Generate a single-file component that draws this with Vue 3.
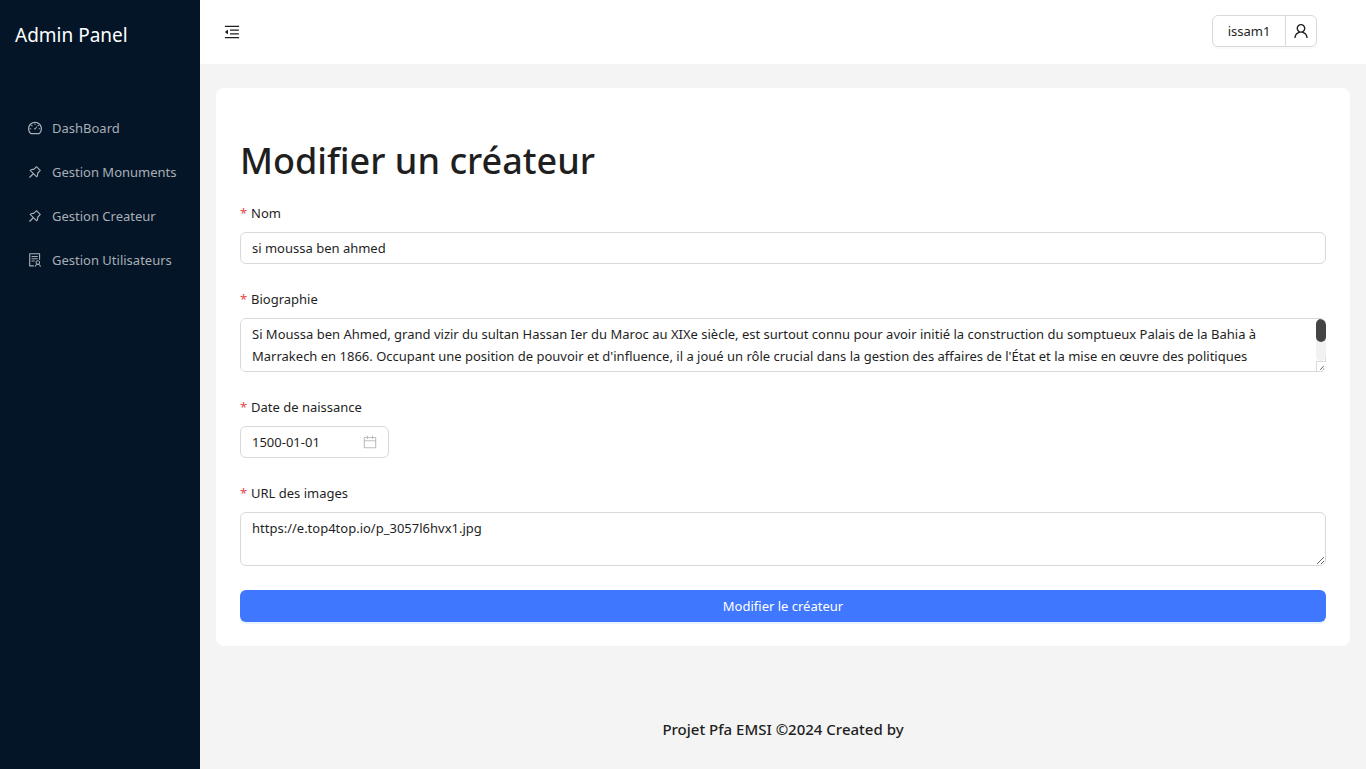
<script setup>
import { ref } from 'vue'

const icons = {
  dashboard: 'M924.8 385.6a446.700 446.700 0 00-96-142.400 446.700 446.700 0 00-142.400-96C631.100 123.800 572.500 112 512 112s-119.100 11.800-174.400 35.200a446.700 446.700 0 00-142.400 96 446.700 446.700 0 00-96 142.400C75.800 440.900 64 499.500 64 560c0 132.700 58.300 257.700 159.900 343.100l1.700 1.400c5.800 4.800 13.100 7.500 20.600 7.500h531.700c7.500 0 14.800-2.700 20.600-7.500l1.700-1.400C901.700 817.700 960 692.700 960 560c0-60.500-11.900-119.100-35.200-174.400zM761.400 836H262.600A371.120 371.120 0 01140 560c0-99.400 38.700-192.800 109-263 70.300-70.300 163.700-109 263-109 99.400 0 192.800 38.700 263 109 70.300 70.300 109 163.700 109 263 0 105.600-44.500 205.500-122.600 276zM623.500 421.500a8.030 8.030 0 00-11.300 0L527.700 506c-18.700-5-39.400-.2-54.100 14.500a55.950 55.950 0 000 79.200 55.950 55.950 0 0079.200 0 55.870 55.870 0 0014.500-54.100l84.500-84.500c3.100-3.100 3.100-8.200 0-11.300l-28.300-28.300zM490 320h44c4.400 0 8-3.600 8-8v-80c0-4.400-3.600-8-8-8h-44c-4.400 0-8 3.600-8 8v80c0 4.400 3.600 8 8 8zm260 218v44c0 4.400 3.600 8 8 8h80c4.400 0 8-3.600 8-8v-44c0-4.400-3.600-8-8-8h-80c-4.400 0-8 3.600-8 8zm12.700-197.200l-31.100-31.100a8.030 8.030 0 00-11.300 0l-56.600 56.600a8.030 8.030 0 000 11.300l31.100 31.100c3.100 3.100 8.200 3.100 11.300 0l56.600-56.600c3.100-3.100 3.100-8.200 0-11.300zm-458.600-31.100a8.030 8.030 0 00-11.300 0l-31.100 31.100a8.030 8.030 0 000 11.300l56.600 56.600c3.100 3.100 8.200 3.100 11.300 0l31.100-31.100c3.100-3.100 3.100-8.200 0-11.300l-56.600-56.600zM262 530h-80c-4.400 0-8 3.600-8 8v44c0 4.400 3.600 8 8 8h80c4.400 0 8-3.600 8-8v-44c0-4.400-3.600-8-8-8z',
  pin: 'M878.3 392.1L631.900 145.700c-6.500-6.500-15-9.700-23.500-9.700s-17 3.200-23.500 9.700L423.800 306.900c-12.200-1.400-24.500-2-36.800-2-73.200 0-146.400 24.100-206.500 72.300a33.230 33.230 0 00-2.700 49.400l181.700 181.700-215.400 215.200a15.800 15.800 0 00-4.600 9.800l-3.400 37.200c-.9 9.400 6.600 17.400 15.900 17.400.5 0 1 0 1.500-.1l37.200-3.400c3.700-.3 7.200-2 9.800-4.600l215.400-215.400 181.700 181.700c6.500 6.500 15 9.700 23.500 9.700 9.700 0 19.300-4.200 25.900-12.400 56.300-70.300 79.700-158.300 70.200-243.400l161.100-161.100c12.900-12.800 12.900-33.800 0-46.800zM666.200 549.300l-24.500 24.500 3.800 34.400a259.920 259.920 0 01-30.400 153.900L262 408.800c12.900-7.100 26.300-13.100 40.300-17.900 27.200-9.400 55.700-14.100 84.700-14.100 9.600 0 19.300.5 28.900 1.600l34.400 3.800 24.500-24.500L608.500 224 800 415.500 666.200 549.300z',
  solution: 'M688 264c0-4.400-3.600-8-8-8H296c-4.400 0-8 3.600-8 8v48c0 4.400 3.600 8 8 8h384c4.400 0 8-3.600 8-8v-48zm-8 136H296c-4.400 0-8 3.600-8 8v48c0 4.400 3.600 8 8 8h384c4.400 0 8-3.600 8-8v-48c0-4.400-3.600-8-8-8zM480 544H296c-4.400 0-8 3.600-8 8v48c0 4.400 3.600 8 8 8h184c4.400 0 8-3.600 8-8v-48c0-4.400-3.600-8-8-8zm-48 308H208V148h560v344c0 4.400 3.600 8 8 8h56c4.400 0 8-3.600 8-8V108c0-17.700-14.300-32-32-32H168c-17.700 0-32 14.300-32 32v784c0 17.700 14.300 32 32 32h264c4.400 0 8-3.600 8-8v-56c0-4.400-3.600-8-8-8zm356.800-74.400c29-26.300 47.200-64.300 47.200-106.600 0-79.500-64.500-144-144-144s-144 64.500-144 144c0 42.300 18.200 80.300 47.200 106.600-57 32.500-96.200 92.700-99.200 162.100-.2 4.500 3.500 8.300 8 8.300h48.100c4.200 0 7.700-3.300 8-7.600C564 871.200 621.700 816 692 816s128 55.200 131.900 124.400c.2 4.200 3.700 7.600 8 7.600H880c4.600 0 8.200-3.800 8-8.300-2.900-69.500-42.200-129.600-99.200-162.100zM692 591c44.200 0 80 35.800 80 80s-35.800 80-80 80-80-35.800-80-80 35.800-80 80-80z',
  fold: 'M408 442h480c4.400 0 8-3.600 8-8v-56c0-4.400-3.600-8-8-8H408c-4.400 0-8 3.600-8 8v56c0 4.400 3.600 8 8 8zm-8 204c0 4.400 3.600 8 8 8h480c4.400 0 8-3.600 8-8v-56c0-4.400-3.600-8-8-8H408c-4.400 0-8 3.600-8 8v56zm504-486H120c-4.400 0-8 3.600-8 8v56c0 4.400 3.600 8 8 8h784c4.400 0 8-3.600 8-8v-56c0-4.400-3.600-8-8-8zm0 632H120c-4.400 0-8 3.600-8 8v56c0 4.400 3.600 8 8 8h784c4.400 0 8-3.600 8-8v-56c0-4.400-3.600-8-8-8zM115.400 518.900L271.700 642c5.800 4.600 14.400.5 14.400-6.900V388.900c0-7.400-8.500-11.500-14.400-6.900L115.400 505.100a8.740 8.740 0 000 13.800z',
  user: 'M858.5 763.600a374 374 0 00-80.600-119.500 375.630 375.630 0 00-119.500-80.600c-.4-.2-.8-.3-1.200-.5C719.500 518 760 444.700 760 362c0-137-111-248-248-248S264 225 264 362c0 82.700 40.500 156 102.800 201.100-.4.2-.8.3-1.200.5-44.800 18.900-85 46-119.500 80.600a375.630 375.630 0 00-80.600 119.500A371.700 371.700 0 00136 901.800a8 8 0 008 8.200h60c4.400 0 7.900-3.500 8-7.800 2-77.200 33-149.500 87.800-204.300 56.700-56.700 132-87.900 212.200-87.900s155.500 31.200 212.200 87.900C779 752.700 810 825 812 902.200c.1 4.400 3.600 7.800 8 7.800h60a8 8 0 008-8.200c-1-47.800-10.900-94.300-29.500-138.200zM512 534c-45.900 0-89.100-17.900-121.600-50.400S340 407.900 340 362c0-45.900 17.900-89.100 50.400-121.600S466.100 190 512 190s89.100 17.900 121.600 50.400S684 316.100 684 362c0 45.900-17.900 89.100-50.400 121.600S557.900 534 512 534z',
  calendar: 'M880 184H712v-64c0-4.400-3.600-8-8-8h-56c-4.400 0-8 3.600-8 8v64H384v-64c0-4.400-3.600-8-8-8h-56c-4.400 0-8 3.600-8 8v64H144c-17.700 0-32 14.300-32 32v664c0 17.700 14.300 32 32 32h736c17.700 0 32-14.300 32-32V216c0-17.700-14.300-32-32-32zm-40 656H184V460h656v380zM184 392V256h128v48c0 4.400 3.600 8 8 8h56c4.400 0 8-3.600 8-8v-48h256v48c0 4.400 3.600 8 8 8h56c4.400 0 8-3.600 8-8v-48h128v136H184z'
}

const menu = [
  { label: 'DashBoard', icon: 'dashboard' },
  { label: 'Gestion Monuments', icon: 'pin' },
  { label: 'Gestion Createur', icon: 'pin' },
  { label: 'Gestion Utilisateurs', icon: 'solution' }
]

const nom = ref('si moussa ben ahmed')
const biographie = ref(
  "Si Moussa ben Ahmed, grand vizir du sultan Hassan Ier du Maroc au XIXe siècle, est surtout connu pour avoir initié la construction du somptueux Palais de la Bahia à\nMarrakech en 1866. Occupant une position de pouvoir et d'influence, il a joué un rôle crucial dans la gestion des affaires de l'État et la mise en œuvre des politiques\n\n"
)
const naissance = ref('1500-01-01')
const images = ref('https://e.top4top.io/p_3057l6hvx1.jpg')
</script>

<template>
  <div class="layout">
    <aside class="sider">
      <div class="brand">Admin Panel</div>
      <nav class="menu">
        <a v-for="item in menu" :key="item.label" class="menu-item" href="#">
          <svg class="icon" viewBox="64 64 896 896" aria-hidden="true"><path :d="icons[item.icon]" /></svg>
          <span>{{ item.label }}</span>
        </a>
      </nav>
    </aside>

    <div class="main">
      <header class="header">
        <button class="fold" type="button" aria-label="Menu">
          <svg class="icon large" viewBox="64 64 896 896" aria-hidden="true"><path :d="icons.fold" /></svg>
        </button>
        <div class="account">
          <button class="account-name" type="button">issam1</button>
          <button class="account-icon" type="button" aria-label="Compte">
            <svg class="icon large" viewBox="64 64 896 896" aria-hidden="true"><path :d="icons.user" /></svg>
          </button>
        </div>
      </header>

      <main class="card">
        <h1>Modifier un créateur</h1>
        <form @submit.prevent>
          <div class="field">
            <label for="nom">Nom</label>
            <input id="nom" v-model="nom" class="control" type="text" />
          </div>
          <div class="field">
            <label for="bio">Biographie</label>
            <div class="scroll-area">
              <textarea id="bio" v-model="biographie" class="control" rows="2" spellcheck="false"></textarea>
              <div class="scrollbar" aria-hidden="true">
                <div class="track"><div class="thumb"></div></div>
                <svg class="grip" viewBox="0 0 10 10"><path d="M3.500 8.500l4-4M6.500 8.500l1-1" /></svg>
              </div>
            </div>
          </div>
          <div class="field">
            <label for="naissance">Date de naissance</label>
            <div class="control picker">
              <input id="naissance" v-model="naissance" type="text" />
              <svg class="icon" viewBox="64 64 896 896" aria-hidden="true"><path :d="icons.calendar" /></svg>
            </div>
          </div>
          <div class="field">
            <label for="images">URL des images</label>
            <textarea id="images" v-model="images" class="control" rows="2" spellcheck="false"></textarea>
          </div>
          <button class="submit" type="submit">Modifier le créateur</button>
        </form>
      </main>

      <footer class="footer">Projet Pfa EMSI ©2024 Created by</footer>
    </div>
  </div>
</template>

<style>
body {
  margin: 0;
}
</style>

<style scoped>
.layout {
  display: flex;
  min-height: 100vh;
  background: #f4f4f4;
  color: #1f1f1f;
  font-family: "Noto Sans", "Open Sans", sans-serif;
  font-size: 13px;
  line-height: 22px;
}
.layout *,
.layout *::before {
  box-sizing: border-box;
}
button,
input,
textarea {
  margin: 0;
  color: inherit;
  font: inherit;
}
button {
  cursor: pointer;
}
.icon {
  display: block;
  flex: none;
  width: 14px;
  height: 14px;
  fill: currentColor;
}
.icon.large {
  width: 16px;
  height: 16px;
}
.sider {
  flex: 0 0 200px;
  min-width: 0;
  background: #041527;
  color: #fff;
}
.brand {
  padding: 20px 15px;
  font-size: 19px;
  line-height: 30px;
}
.menu {
  display: flex;
  flex-direction: column;
  gap: 4px;
  padding: 38px 4px;
}
.menu-item {
  display: flex;
  align-items: center;
  gap: 10px;
  height: 40px;
  padding: 0 16px 0 24px;
  color: #a8afb6;
  text-decoration: none;
  white-space: nowrap;
}
.main {
  display: flex;
  flex: 1;
  flex-direction: column;
  min-width: 0;
}
.header {
  display: flex;
  align-items: center;
  justify-content: space-between;
  height: 64px;
  padding: 0 49px 2px 0;
  background: #fff;
}
.fold {
  display: grid;
  place-items: center;
  width: 64px;
  height: 62px;
  padding: 2px 0 0;
  border: 0;
  background: none;
}
.account {
  display: flex;
}
.account button {
  height: 32px;
  border: 1px solid #d9d9d9;
  background: #fff;
  box-shadow: 0 2px 0 rgba(0, 0, 0, 0.02);
}
.account .account-name {
  width: 74px;
  padding: 0;
  border-radius: 6px 0 0 6px;
}
.account .account-icon {
  display: grid;
  place-items: center;
  width: 32px;
  margin-left: -1px;
  padding: 0;
  border-radius: 0 6px 6px 0;
}
.card {
  margin: 24px 16px 0;
  padding: 50px 24px 24px;
  border-radius: 8px;
  background: #fff;
}
h1 {
  margin: 0 0 18px;
  font-size: 36px;
  font-weight: 500;
  line-height: 46px;
}
.field {
  display: flex;
  flex-direction: column;
  align-items: flex-start;
  margin-bottom: 24px;
}
label {
  margin-bottom: 8px;
}
label::before {
  content: "*";
  display: inline-block;
  width: 11px;
  color: #e5484d;
}
.control {
  display: block;
  width: 100%;
  padding: 4px 11px;
  border: 1px solid #d9d9d9;
  border-radius: 6px;
  outline: 0;
  background: #fff;
}
textarea.control {
  height: 54px;
  resize: vertical;
}
.scroll-area {
  position: relative;
  width: 100%;
}
.scroll-area textarea.control {
  resize: none;
  scrollbar-width: none;
}
.scrollbar {
  position: absolute;
  top: 1px;
  right: 0;
  bottom: 1px;
  display: flex;
  flex-direction: column;
  width: 10px;
  border-radius: 0 6px 6px 0;
  overflow: hidden;
}
.track {
  flex: 1;
  border-radius: 5px;
  background: #f1f1f1;
}
.thumb {
  height: 23px;
  border-radius: 5px;
  background: #444;
}
.grip {
  display: block;
  width: 10px;
  height: 10px;
  border-top: 1px solid #d9d9d9;
  border-left: 1px solid #d9d9d9;
  background: #fff;
  fill: none;
  stroke: #444;
}
.picker {
  display: flex;
  align-items: center;
  width: 149px;
  color: #bfbfbf;
}
.picker input {
  flex: 1;
  min-width: 0;
  padding: 0;
  border: 0;
  outline: 0;
  background: none;
  color: #1f1f1f;
}
.submit {
  display: block;
  width: 100%;
  height: 32px;
  padding: 0;
  border: 0;
  border-radius: 6px;
  background: #4077ff;
  box-shadow: 0 2px 0 #e9f3ff;
  color: #fff;
}
.footer {
  padding: 71px 50px 28px;
  font-size: 15px;
  font-weight: 500;
  line-height: 24px;
  text-align: center;
}
</style>
